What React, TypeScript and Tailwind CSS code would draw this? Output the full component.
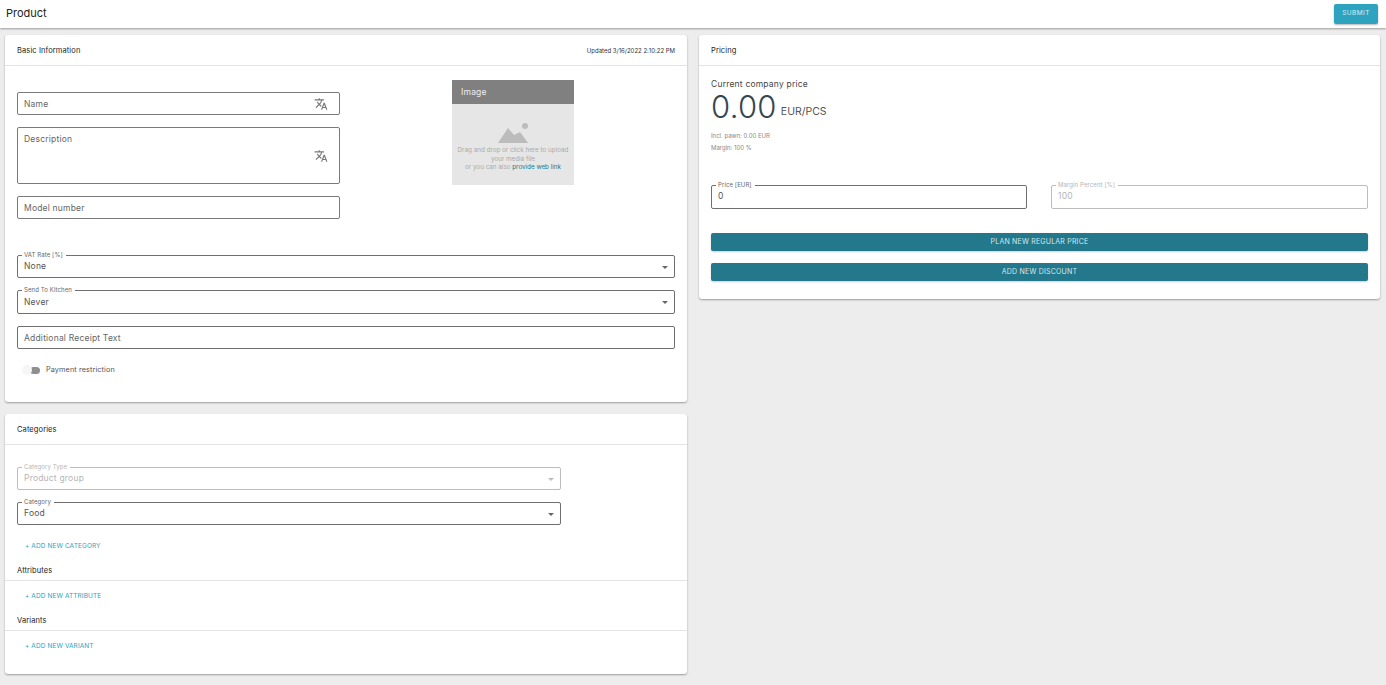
import { MdTranslate } from 'react-icons/md'

function Card({ title, right, children, className }: { title: string; right?: string; children: React.ReactNode; className?: string }) {
  return (
    <section className={`bg-white rounded-[3px] shadow-[0_1px_2px_rgba(0,0,0,0.35)] ${className ?? ''}`}>
      <div className="h-[31px] border-b border-[#e4e4e4] px-3 pt-[1px] flex items-center justify-between">
        <h2 className="text-[7.5px] text-[#222] tracking-[0.1px]">{title}</h2>
        {right && <span className="text-[6px] text-[#333]">{right}</span>}
      </div>
      {children}
    </section>
  )
}

function PlainField({ label, tall, translate }: { label: string; tall?: boolean; translate?: boolean }) {
  return (
    <div className={`relative border border-[#7a7a7a] rounded-[2px] pl-[6px] ${tall ? 'h-[57px] pt-[5px]' : 'h-[23px] flex items-center pt-[1px]'}`}>
      <span className="block text-[8.5px] leading-[12px] text-[#666] tracking-[0.2px]">{label}</span>
      {translate && <MdTranslate className={`absolute right-[11px] w-[14px] h-[14px] text-[#777] ${tall ? 'top-[21px]' : 'top-[4px]'}`} />}
    </div>
  )
}

function OutlinedField({ label, value, disabled, select, short }: { label: string; value: string; disabled?: boolean; select?: boolean; short?: boolean }) {
  return (
    <div className={`relative border rounded-[2px] pl-[6px] flex items-center ${short ? 'h-[23px]' : 'h-[24px]'} ${disabled ? 'border-[#bdbdbd]' : 'border-[#6f6f6f]'}`}>
      <span className={`absolute left-[4px] -top-[5px] bg-white pl-[2px] pr-[3px] text-[6px] leading-[8px] tracking-[0.1px] ${disabled ? 'text-[#b5b5b5]' : 'text-[#666]'}`}>{label}</span>
      <span className={`text-[8.5px] tracking-[0.2px] ${disabled ? 'text-[#b5b5b5]' : 'text-[#555]'}`}>{value}</span>
      {select && <span className={`absolute right-[6px] top-[10px] border-x-[3px] border-x-transparent border-t-[3px] ${disabled ? 'border-t-[#bbb]' : 'border-t-[#666]'}`} />}
    </div>
  )
}

function AddLink({ text }: { text: string }) {
  return <div className="pl-5 h-[10px] text-[6.5px] leading-[10px] text-[#2ea3c0] tracking-[0.1px]">+ ADD NEW {text}</div>
}

function SectionTitle({ text }: { text: string }) {
  return <h3 className="mt-[14px] pl-3 pb-[3px] text-[7.5px] leading-[12px] text-[#222] border-b border-[#e4e4e4] tracking-[0.1px]">{text}</h3>
}

function ImageDrop() {
  return (
    <div className="w-[122px] h-[105px] bg-[#e6e6e6]">
      <div className="h-6 bg-[#808080] pl-[9px] flex items-center text-[8.5px] text-[#eee] tracking-[0.2px]">Image</div>
      <div className="flex flex-col items-center pt-[18px]">
        <svg width="30" height="22" viewBox="0 0 30 22" className="text-[#bcbcbc]" fill="currentColor">
          <circle cx="27" cy="4" r="3" />
          <path d="M0 21 L10 6 L16 13 L22 10 L30 21 Z" />
        </svg>
        <p className="text-[6.3px] leading-[8.5px] text-[#aaa] text-center mt-[2px]">
          Drag and drop or click here to upload<br />your media file<br />or you can also <span className="text-[#23788c]">provide web link</span>
        </p>
      </div>
    </div>
  )
}

const actionBtn = 'h-[18px] bg-[#23788c] rounded-[2px] text-[7px] text-[#d7e8ec] tracking-[0.2px] shadow-[0_1px_2px_rgba(0,0,0,0.2)]'

export default function App() {
  return (
    <div className="min-h-[685px] bg-[#ededed] font-['Inter','Liberation_Sans',sans-serif]">
      <header className="h-[28px] bg-white shadow-[0_1px_2px_rgba(0,0,0,0.35)] pl-[6px] pr-2 flex items-center justify-between">
        <h1 className="text-[11px] text-[#222] pb-[2px]">Product</h1>
        <button className="w-[44px] h-[20px] bg-[#2ea3c0] rounded-[2px] text-[6.5px] text-[#d9eef3] tracking-[0.4px] shadow-[0_1px_2px_rgba(0,0,0,0.3)]">SUBMIT</button>
      </header>

      <main className="grid grid-cols-[682px_681px] gap-x-3 pl-[5px] pt-[7px]">
        <div className="flex flex-col gap-3">
          <Card title="Basic Information" right="Updated 3/16/2022 2:10:22 PM" className="h-[367px]">
            <div className="px-3 pt-[14px]">
              <div className="flex h-[160px]">
                <div className="w-[323px] pt-3 flex flex-col gap-3">
                  <PlainField label="Name" translate />
                  <PlainField label="Description" tall translate />
                  <PlainField label="Model number" />
                </div>
                <div className="ml-[112px]"><ImageDrop /></div>
              </div>
              <div className="mt-[15px] flex flex-col gap-3">
                <OutlinedField label="VAT Rate [%]" value="None" select short />
                <OutlinedField label="Send To Kitchen" value="Never" select />
                <div className="h-[23px] border border-[#6f6f6f] rounded-[2px] pl-[6px] pt-[1px] flex items-center">
                  <span className="text-[8.5px] text-[#666] tracking-[0.2px]">Additional Receipt Text</span>
                </div>
              </div>
              <div className="mt-[16px] pl-[5px] flex items-center gap-[6px]">
                <div className="relative w-[18px] h-[10px]">
                  <div className="absolute left-[8px] top-[2px] w-[10px] h-[7px] rounded-full bg-[#8f8f8f]" />
                  <div className="absolute left-0 top-0 w-[10px] h-[10px] rounded-full bg-[#f6f6f6]" />
                </div>
                <span className="text-[7.3px] text-[#555] tracking-[0.1px]">Payment restriction</span>
              </div>
            </div>
          </Card>

          <Card title="Categories" className="h-[260px]">
            <div className="w-[570px] pl-3 pr-[14px] pt-[22px] flex flex-col gap-3">
              <OutlinedField label="Category Type" value="Product group" disabled select short />
              <OutlinedField label="Category" value="Food" select short />
            </div>
            <div className="mt-4"><AddLink text="CATEGORY" /></div>
            <SectionTitle text="Attributes" />
            <div className="mt-[10px]"><AddLink text="ATTRIBUTE" /></div>
            <SectionTitle text="Variants" />
            <div className="mt-[10px]"><AddLink text="VARIANT" /></div>
          </Card>
        </div>

        <div>
          <Card title="Pricing" className="h-[264px]">
            <div className="px-3 pt-3">
              <div className="text-[8.5px] text-[#444] tracking-[0.2px]">Current company price</div>
              <div className="flex items-end gap-1 -mt-[2px]">
                <span className="text-[31px] leading-[36px] font-light text-[#37474f] tracking-[0.3px]">0.00</span>
                <span className="text-[10.5px] text-[#555] mb-[5px]">EUR/PCS</span>
              </div>
              <div className="mt-[5px] text-[6px] leading-[12px] text-[#888]">Incl. pawn: 0.00 EUR<br />Margin: 100 %</div>
              <div className="mt-[31px] grid grid-cols-[316px_317px] gap-x-6">
                <OutlinedField label="Price [EUR]" value="0" />
                <OutlinedField label="Margin Percent [%]" value="100" disabled />
              </div>
              <div className="mt-6 flex flex-col gap-3">
                <button className={actionBtn}>PLAN NEW REGULAR PRICE</button>
                <button className={actionBtn}>ADD NEW DISCOUNT</button>
              </div>
            </div>
          </Card>
        </div>
      </main>
    </div>
  )
}
